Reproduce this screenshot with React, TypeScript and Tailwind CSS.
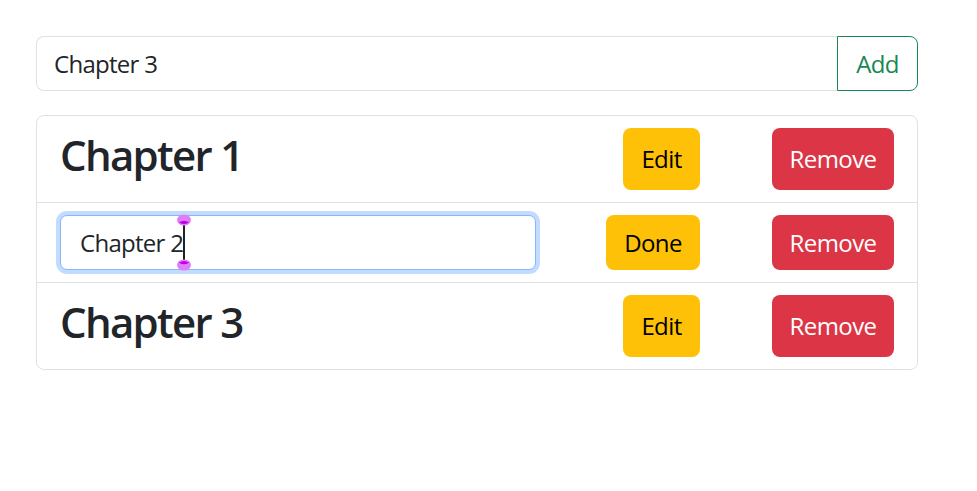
import React from 'react';

const font = { fontFamily: '"Open Sans", "Noto Sans", sans-serif' };

function Handle({ flip }: { flip?: boolean }) {
  return (
    <svg width="14" height="12" viewBox="0 0 14 12" className={flip ? 'rotate-180' : ''}>
      <ellipse cx="7" cy="6" rx="7" ry="5.5" fill="#e07ef7" />
      <path d="M2 8.2 Q7 5.2 12 8.2 Q7 12 2 8.2 Z" fill="#c000ea" />
    </svg>
  );
}

function Row({ title, editing, last }: { title: string; editing?: boolean; last?: boolean }) {
  return (
    <div className={`flex items-center px-[23px] py-[12px] ${last ? '' : 'border-b border-[#dee2e6]'}`}>
      <div className="flex-1">
        {editing ? (
          <div className="h-[55px] w-[476px] rounded-[7px] border border-[#86b7fe] bg-white pl-[19px] flex items-center text-[24px] tracking-[-0.03em] text-[#212529] shadow-[0_0_0_4px_#c2dbfe]">
            <span>Chapter 2</span>
            <span className="relative ml-[0px] inline-block h-[36px] w-[2px] bg-[#222]">
              <span className="absolute left-[-6px] top-[-11px] flex"><Handle /></span>
              <span className="absolute left-[-6px] bottom-[-10px] flex"><Handle flip /></span>
            </span>
          </div>
        ) : (
          <h1 className="mb-[8px] text-[42px] font-semibold leading-[1.2] tracking-[-0.04em] text-[#212529]">{title}</h1>
        )}
      </div>
      <button
        className={`rounded-[8px] bg-[#ffc107] text-[24px] tracking-[-0.025em] text-black ${editing ? 'h-[55px] w-[94px]' : 'h-[62px] w-[77px]'}`}
      >
        {editing ? 'Done' : 'Edit'}
      </button>
      <button
        className={`ml-[72px] w-[122px] rounded-[8px] bg-[#dc3545] text-[24px] tracking-[-0.025em] text-white ${editing ? 'h-[55px]' : 'h-[62px]'}`}
      >
        Remove
      </button>
    </div>
  );
}

export default function App() {
  return (
    <div className="min-h-screen bg-white pt-[36px] pl-[36px]" style={font}>
      <div className="w-[882px]">
        <div className="flex h-[55px]">
          <div className="flex-1 flex items-center rounded-l-[8px] border border-r-0 border-[#dee2e6] pl-[17px] text-[24px] tracking-[-0.03em] text-[#212529]">
            Chapter 3
          </div>
          <button className="w-[81px] rounded-r-[8px] border border-[#198754] text-[24px] tracking-[-0.025em] text-[#198754]">
            Add
          </button>
        </div>

        <div className="mt-[24px] rounded-[8px] border border-[#dee2e6]">
          <Row title="Chapter 1" />
          <Row title="Chapter 2" editing />
          <Row title="Chapter 3" last />
        </div>
      </div>
    </div>
  );
}
